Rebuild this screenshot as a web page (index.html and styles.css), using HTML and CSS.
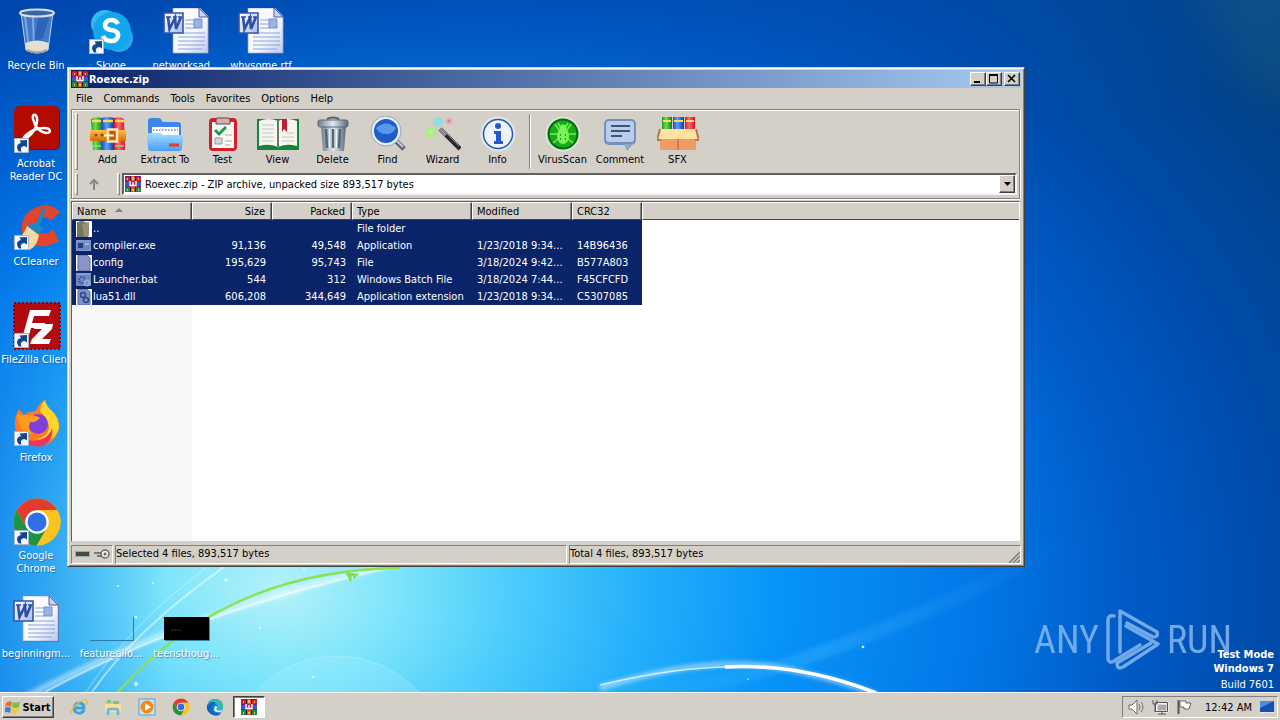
FILE: index.html
```html
<!DOCTYPE html>
<html lang="en">
<head>
<meta charset="utf-8">
<title>Roexec.zip</title>
<link rel="stylesheet" href="styles.css">
</head>
<body>
<svg class="defs" aria-hidden="true">
  <defs>
    <linearGradient id="gPaper" x1="0" y1="0" x2="1" y2="1"><stop offset="0" stop-color="#fff"/><stop offset=".6" stop-color="#f4f7ff"/><stop offset="1" stop-color="#b9c9f0"/></linearGradient>
    <linearGradient id="gWord" x1="0" y1="0" x2="1" y2="1"><stop offset="0" stop-color="#fff"/><stop offset="1" stop-color="#a9bdf0"/></linearGradient>
    <linearGradient id="gG" x1="0" x2="1"><stop offset="0" stop-color="#1d9a28"/><stop offset=".4" stop-color="#6fe04a"/><stop offset="1" stop-color="#0b7d2a"/></linearGradient>
    <linearGradient id="gB" x1="0" x2="1"><stop offset="0" stop-color="#1d4fd0"/><stop offset=".4" stop-color="#5aa2ff"/><stop offset="1" stop-color="#0b3aa0"/></linearGradient>
    <linearGradient id="gR" x1="0" x2="1"><stop offset="0" stop-color="#d0182c"/><stop offset=".4" stop-color="#ff6a72"/><stop offset="1" stop-color="#d01030"/></linearGradient>
    <linearGradient id="gO" x1="0" x2="0" y1="0" y2="1"><stop offset="0" stop-color="#ffc04a"/><stop offset="1" stop-color="#d86a08"/></linearGradient>
    <linearGradient id="gFold" x1="0" y1="0" x2="0" y2="1"><stop offset="0" stop-color="#9fe0ff"/><stop offset="1" stop-color="#4a9cf4"/></linearGradient>
    <linearGradient id="gSteel" x1="0" x2="1"><stop offset="0" stop-color="#6d7f90"/><stop offset=".5" stop-color="#e2eaf0"/><stop offset="1" stop-color="#56687a"/></linearGradient>
  </defs>
  <symbol id="rar" viewBox="0 0 16 16">
    <path fill="#6a1f90" d="M0 0h16v16H0z"/>
    <path fill="#d02030" d="M0 1h5v4H0zM11 1h5v4h-5z"/><path fill="#3558d8" d="M0 6h5v4H0zM11 6h5v4h-5z"/>
    <path fill="#1d8c34" d="M0 11h5v5H0zM11 11h5v5h-5z"/><path fill="#d8543a" d="M5 0h6v16H5z"/>
    <path fill="#3b0a3c" d="M5 0h1v16H5zM10 0h1v16h-1z"/><path fill="#f0c040" d="M2 2h1v2H2zM13 2h1v2h-1zM2 13h1v2H2zM13 13h1v2h-1zM7 1h2v3H7zM7 13h2v2H7z"/>
    <path fill="#a8304a" d="M4 5h8v6H4z"/><path d="M5 5v4.500h6V5M8 6v3" fill="none" stroke="#fff" stroke-width="1.300"/>
  </symbol>
  <symbol id="word" viewBox="0 0 48 48">
    <path d="M11 1h27l8 8v37H11z" fill="#3c5687" opacity=".7"/>
    <path d="M10 0h27l8 8v37H10z" fill="url(#gPaper)" stroke="#8fa3d0" stroke-width=".7"/>
    <path d="M36 0v9h9z" fill="#c6d6f6" stroke="#48639c"/>
    <path d="M22 12h10M22 16h10M22 20h10M15 25h27M15 29h27M15 33h27M15 37h27M15 41h24" stroke="#8da3d2"/>
    <path d="M31 11h8v9h-8z" fill="#9bb3e2" stroke="#7290cc"/>
    <path d="M1 5h19v20H1z" fill="url(#gWord)" stroke="#3455a8" stroke-width="1.600"/>
    <path d="M5 9l1.500 12L12 10l1 11 5-12" fill="none" stroke="#2d4fa5" stroke-width="2.600"/><path d="M3 9h5M10 9h4M15 9h4" stroke="#2d4fa5" stroke-width="1.500"/>
  </symbol>
  <symbol id="link" viewBox="0 0 15 15">
    <path d="M.5.5h14v14H.5z" fill="#f5f8fc" stroke="#a9b8c8"/><path d="M5 13.500C1.500 9 3 6 7 5L5.500 2.500l7.500-.5v7.500L10.500 8C7.500 8.500 6 10 7.500 13.500z" fill="#16458f"/>
  </symbol>
  <symbol id="chrome" viewBox="0 0 48 48">
    <circle cx="24" cy="24" r="23.500" fill="#fbc116"/>
    <path d="M3.700 12.300A23.500 23.500 0 0 1 44.400 12.300H24L14 30z" fill="#e33b2e"/>
    <path d="M3.700 12.300A23.500 23.500 0 0 0 23.800 47.500L34 30H14z" fill="#1d9445"/>
    <path d="M24 12.300h20.400A23.500 23.500 0 0 1 23.800 47.500L34 30z" fill="#fcc31e"/>
    <circle cx="24" cy="24" r="11.800" fill="#fff"/><circle cx="24" cy="24" r="9.500" fill="#2f6fe8"/>
  </symbol>
  <symbol id="books" viewBox="0 0 36 36">
    <path d="M1 3q5-3 11-1v32H3z" fill="url(#gG)"/><path d="M12 2q6-2 12 0v32H12z" fill="url(#gB)"/><path d="M24 2q6-2 10 1l1 31H24z" fill="url(#gR)"/>
    <path d="M2 5h9M13 5h10M25 5h9" stroke="#ffd84a" stroke-width="2.500"/><path d="M3 30h8M25 30h9" stroke="#7af070" stroke-width="2" opacity=".7"/>
    <path d="M0 14h36v11H0z" fill="url(#gO)"/><path d="M18 13.500h9v12h-9z" fill="#c05a10" stroke="#ffe9b0" stroke-width="2.500"/><path d="M14 19.500h10" stroke="#fff3d0" stroke-width="2"/><circle cx="6" cy="19" r="1.500" fill="#8d4a00"/><circle cx="12" cy="19" r="1.500" fill="#8d4a00"/>
  </symbol>
</svg>

<div class="screen">
  <main class="desktop">
    <svg class="wallpaper" viewBox="0 0 1280 692" preserveAspectRatio="none" aria-hidden="true">
      <defs>
        <radialGradient id="sky" gradientUnits="userSpaceOnUse" cx="0" cy="0" r="1.200" gradientTransform="translate(280 590) scale(1000 750)">
          <stop offset="0" stop-color="#b4f2fa"/><stop offset=".1" stop-color="#7ce4fb"/><stop offset=".2" stop-color="#4acbfb"/><stop offset=".3" stop-color="#25b0fb"/><stop offset=".42" stop-color="#0793f8"/><stop offset=".58" stop-color="#0278e8"/><stop offset=".7" stop-color="#005cc8"/><stop offset=".82" stop-color="#004cac"/><stop offset="1" stop-color="#004186"/>
        </radialGradient>
        <linearGradient id="edge" x1="0" x2="1"><stop offset="0" stop-color="#0060e0" stop-opacity=".5"/><stop offset=".13" stop-color="#0070e8" stop-opacity="0"/></linearGradient>
        <linearGradient id="top" gradientUnits="userSpaceOnUse" x1="150" y1="0" x2="200" y2="280"><stop offset="0" stop-color="#0040a4" stop-opacity=".75"/><stop offset="1" stop-color="#0058c0" stop-opacity="0"/></linearGradient>
        <linearGradient id="fade" gradientUnits="userSpaceOnUse" x1="640" y1="0" x2="1080" y2="0"><stop offset="0" stop-color="#4ac0ff" stop-opacity="0"/><stop offset=".4" stop-color="#4ac0ff"/><stop offset="1" stop-color="#3898f4" stop-opacity="0"/></linearGradient>
        <filter id="soft" x="-10%" y="-30%" width="120%" height="160%"><feGaussianBlur stdDeviation="2"/></filter>
        <filter id="softer" x="-50%" y="-50%" width="200%" height="200%"><feGaussianBlur stdDeviation="22"/></filter>
      </defs>
      <path d="M0 0h1280v692H0z" fill="url(#sky)"/><path d="M0 0h1280v692H0z" fill="url(#edge)"/><path d="M0 0h1280v692H0z" fill="url(#top)"/>
      <path d="M1180-30h130v140l-60-20z" fill="#2a6878" opacity=".3" filter="url(#softer)"/>
      <circle cx="337" cy="766" r="110" fill="#b8f4ff" opacity=".2"/><circle cx="337" cy="766" r="110" fill="none" stroke="#d8fbff" opacity=".3"/>
      <g fill="none" stroke="#fff">
        <path d="M640 692Q800 686 1090 530" stroke="url(#fade)" stroke-width="14" opacity=".3" filter="url(#soft)"/>
        <path d="M20 700Q190 610 410 560" stroke-width="6" opacity=".5" filter="url(#soft)"/><path d="M45 692Q200 608 410 563" stroke-width="2" opacity=".5"/>
        <path d="M92 692Q135 630 224 567" stroke-width="2" opacity=".5"/><path d="M86 692Q130 625 207 567" opacity=".4"/>
        <path d="M600 688Q720 650 800 672Q845 682 880 696" stroke-width="5" opacity=".5" filter="url(#soft)"/>
        <path d="M600 685Q680 666 735 667" stroke-width="1.500" opacity=".7"/><path d="M725 667Q800 663 876 693" stroke-width="3.500"/>
      </g>
      <path d="M118 692Q225 570 400 568" fill="none" stroke="#8de04e" stroke-width="2.300"/><path d="M345 572l6 11 1-8 2 4 5-5z" fill="#7ede5a"/>
      <g fill="#e7fcff"><circle cx="226" cy="580" r="1.800"/><circle cx="153" cy="583" r="1"/><circle cx="118" cy="586" r="1"/><circle cx="136" cy="617" r="1.500"/><circle cx="136" cy="684" r="2"/><circle cx="304" cy="570" r="1"/><circle cx="313" cy="677" r="1.300"/><circle cx="260" cy="628" r="1"/><circle cx="748" cy="679" r=".8"/><circle cx="863" cy="647" r="1.300"/></g>
    </svg>

    <div class="anyrun" aria-label="ANY RUN">
      <span>ANY</span>
      <svg width="56" height="64" viewBox="0 0 56 64" fill="none" stroke="currentColor" stroke-width="3.500" stroke-linejoin="round" stroke-linecap="round"><path d="M15 44V3L52 24q2 5-4 5L22 15"/><path d="M9 8q-6-1-6 4v39q1 5 6 2L35 37"/><path d="M21 18L53 36 18 59q-6 3-6-4L46 35"/></svg>
      <span>RUN</span>
    </div>
    <div class="build"><b>Test Mode</b><b>Windows 7</b><span>Build 7601</span></div>

    <div class="icons">
      <div class="item"><svg viewBox="0 0 48 48"><path d="M8 5l5 37q11 6 22 0l5-37z" fill="#9fc3ee" fill-opacity=".4" stroke="#b9cfe8"/><path d="M26 8l10 2-6 20-10 5z" fill="#1a4ea8" opacity=".5"/><path d="M12 8l4 33M20 9l1 30" stroke="#dcecff" stroke-width="2" opacity=".4"/><path d="M12 35q12-5 24 0l-1 7q-11 6-22 0z" fill="#e4dfd5"/><path d="M14 42q10 5 20 0" fill="none" stroke="#a7a29a" stroke-width="2"/><ellipse cx="24" cy="5" rx="17" ry="3.500" fill="#38689f" stroke="#d8dee6" stroke-width="2"/></svg><span>Recycle Bin</span></div>
      <div class="item at-2-1"><svg viewBox="0 0 48 48"><circle cx="17" cy="16" r="14" fill="#35b8f0"/><circle cx="31" cy="30" r="14" fill="#28a8ea"/><circle cx="24" cy="23" r="19" fill="#12a7ec"/><path d="M30 16q-2-4-7-4t-6 5q0 4 6 5 8 1 7 6-1 5-7 5t-8-5" fill="none" stroke="#fff" stroke-width="4.500"/><use href="#link" x="1" y="31" width="15" height="15"/></svg><span>Skype</span></div>
      <div class="item at-3-1"><svg viewBox="0 0 48 48"><use href="#word" width="48" height="48"/></svg><span>networksad...</span></div>
      <div class="item at-4-1"><svg viewBox="0 0 48 48"><use href="#word" width="48" height="48"/></svg><span>whysome.rtf</span></div>
      <div class="item at-1-2"><svg viewBox="0 0 48 48"><rect x="2" width="45" height="44" rx="6" fill="#7d0c08"/><rect x="1" width="45" height="43" rx="6" fill="#b30b00"/><path d="M12 32c7-2 13-12 12-20-1-5-5-4-4 1 2 8 7 13 13 14 6 0 5-5-2-5-8 0-15 4-19 8-3 4-1 5 1 1z" fill="none" stroke="#fff" stroke-width="2.500"/><use href="#link" x="1" y="32" width="15" height="15"/></svg><span>Acrobat Reader DC</span></div>
      <div class="item at-1-3"><svg viewBox="0 0 48 48"><path d="M47 8Q39-1 27 2 12 6 9 20q-2 14 9 20 13 6 28-3l-6-12q-6 6-12 4-7-4-4-11 5-8 15-2z" fill="#e2452f"/><path d="M30 4l3 1-6 16 4 4-8 6-10-7 6-5 4 0z" fill="#1e86c4"/><path d="M14 22l12 9q-2 12-10 15L0 37q10-3 14-15z" fill="#f3d9a2"/><use href="#link" x="1" y="31" width="15" height="15"/></svg><span>CCleaner</span></div>
      <div class="item at-1-4"><svg viewBox="0 0 48 48"><path d="M1 1h46v46H1z" fill="#b20a0e" stroke="#8b0508" stroke-width="2" stroke-dasharray="2 2"/><path d="M17 8h21l-2 6H21l-2 7h13l-2 5H18l-4 14H8z" fill="#fff"/><path d="M22 22h18l-1 5-10 10h9l-2 5H17l2-5 10-10h-8z" fill="#fff"/><use href="#link" x="1" y="31" width="15" height="15"/></svg><span>FileZilla Client</span></div>
      <div class="item at-1-5"><svg viewBox="0 0 48 48"><path d="M6 9l5 6q6-4 12-4 2-7 9-11 1 6 6 10 9 8 8 18-3 17-22 18Q4 45 2 28 1 17 6 9z" fill="#ff7b22"/><path d="M32 0q-5 5-5 11 9 8 9 17-1 9-12 11 17 6 22-11Q46 17 38 10 33 6 32 0z" fill="#ffd42e"/><path d="M2 28q8 16 24 12 11-3 13-12 2 12-9 18Q7 49 2 28z" fill="#f1335c"/><circle cx="25" cy="24" r="10" fill="#7c3fd8"/><path d="M4 14q8 2 13 1 8 1 10 3-4 5-10 4-3 8 3 12Q6 34 4 14z" fill="#ff9a20"/><use href="#link" x="1" y="31" width="15" height="15"/></svg><span>Firefox</span></div>
      <div class="item at-1-6"><svg viewBox="0 0 48 48"><use href="#chrome" width="48" height="48"/><use href="#link" x="1" y="32" width="15" height="15"/></svg><span>Google Chrome</span></div>
      <div class="item at-1-7"><svg viewBox="0 0 48 48"><use href="#word" width="48" height="48"/></svg><span>beginningm...</span></div>
      <div class="item at-2-7"><svg viewBox="0 0 48 48"><path d="M2 44.500h43.500V21" fill="none" stroke="#257fa8"/></svg><span>featureallo...</span></div>
      <div class="item at-3-7"><svg viewBox="0 0 48 48"><path d="M2 22h45v23H2z" fill="#104c62" opacity=".6"/><path d="M1 21h45v23H1z"/><path d="M8 34h10" stroke="#454535" stroke-dasharray="2 1"/></svg><span>teensthoug...</span></div>
    </div>

    <section class="window">
      <header class="titlebar">
        <svg width="16" height="16"><use href="#rar"/></svg><h1>Roexec.zip</h1>
        <div class="controls">
          <button class="ctl" aria-label="Minimize"><svg width="12" height="10"><path d="M2 8h6" stroke="#000" stroke-width="2"/></svg></button><button class="ctl" aria-label="Maximize"><svg width="12" height="10"><path d="M1.500 1v8h8V1z" fill="none" stroke="#000"/><path d="M1 1h9" stroke="#000" stroke-width="2"/></svg></button><button class="ctl close" aria-label="Close"><svg width="12" height="10"><path d="M2 1l7 7M9 1L2 8" stroke="#000" stroke-width="1.600"/></svg></button>
        </div>
      </header>
      <nav class="menu"><button>File</button><button>Commands</button><button>Tools</button><button>Favorites</button><button>Options</button><button>Help</button></nav>
      <div class="rebar">
        <div class="toolbar">
          <i class="grip"></i>
          <button class="tool"><svg viewBox="0 0 36 36"><use href="#books"/></svg>Add</button>
          <button class="tool wide"><svg viewBox="0 0 36 36"><path d="M1 5q0-3 3-3h7q3 0 4 3l1 1h15q3 0 3 3v20H1z" fill="#3f86ea"/><path d="M5 11h27v9H5z" fill="#fff"/><path d="M6 14h25" stroke="#87a4c8" stroke-width="2" stroke-dasharray="1.500 1.500"/><path d="M0 20q0-3 3-3h10l3 2h17q3 0 3 3l-1 10q0 3-3 3H4q-3 0-3-3z" fill="url(#gFold)"/><path d="M22 29h10" stroke="#e23a2e" stroke-width="3"/></svg>Extract To</button>
          <button class="tool"><svg viewBox="0 0 36 36"><rect x="4" y="2" width="28" height="33" rx="4" fill="#d2202e"/><path d="M7 6h22v26H7z" fill="#faf8f6"/><path d="M11 8V4q0-2 2-2h10q2 0 2 2v4z" fill="#d9aeb0" stroke="#59464d"/><path d="M10 14l4 4 7-7" fill="none" stroke="#1f9a43" stroke-width="3"/><path d="M10 22h7v6h-7z" fill="#d7d7d7" stroke="#999"/><path d="M20 19h7M20 25h7M20 29h5" stroke="#aaa"/></svg>Test</button>
          <button class="tool"><svg class="broad" viewBox="0 0 42 36"><path d="M0 3h42v31H0z" fill="#168438"/><path d="M2 5q10-4 19 0 9-4 19 0v25q-10-3-19 1-9-4-19-1z" fill="#f7f5ef"/><path d="M21 5v27" stroke="#6b776c" stroke-width="2"/><path d="M5 9h12M5 13h12M5 17h12M5 21h12M5 25h12M30 17h7M25 21h12M25 25h12" stroke="#c3c6bf"/><path d="M25 3h5v13l-3-3-2 3z" fill="#bf1c35"/></svg>View</button>
          <button class="tool"><svg viewBox="0 0 36 36"><path d="M6 10h25l-2 25H8z" fill="url(#gSteel)"/><path d="M11 13l1 19M18 13v19M25 13l-1 19" stroke="#546576" stroke-width="2.500"/><path d="M14.500 13v19M21.500 13v19" stroke="#eaf2f8"/><rect x="3" y="4" width="30" height="7" rx="2" fill="url(#gSteel)" stroke="#56687a"/><path d="M12 3q6-3 12 0" fill="none" stroke="#525f6c" stroke-width="2"/></svg>Delete</button>
          <button class="tool"><svg viewBox="0 0 36 36"><path d="M25 24l9 9" stroke="#5e666d" stroke-width="5"/><path d="M25 23l8 8" stroke="#c8ced4" stroke-width="2"/><circle cx="16" cy="15" r="15" fill="#e5edf5" stroke="#95a5b9"/><circle cx="16" cy="15" r="12" fill="#205cc8"/><path d="M6 12q10-9 20 0-4 7-10 6Q9 18 6 12z" fill="#6aacf5" opacity=".75"/></svg>Find</button>
          <button class="tool"><svg viewBox="0 0 36 36"><path d="M15 13l20 20" stroke="#27292c" stroke-width="4.500"/><path d="M15 13l6 6" stroke="#8d8d8d" stroke-width="4"/><path d="M17 13l17 17" stroke="#8d8d8d"/><g opacity=".35"><circle cx="6" cy="16" r="6" fill="#8aff4e"/><circle cx="13" cy="6" r="5" fill="#48dcff"/><circle cx="24" cy="5" r="3.500" fill="#ff829a"/></g><circle cx="6" cy="16" r="3" fill="#a6ff6b"/><circle cx="13" cy="6" r="2.500" fill="#72ecf4"/><circle cx="24" cy="5" r="1.500" fill="#ff6e88"/></svg>Wizard</button>
          <button class="tool"><svg viewBox="0 0 36 36"><circle cx="18" cy="18" r="17.500" fill="#dce5f2"/><circle cx="18" cy="18" r="14.500" fill="#eef4fd" stroke="#2859a9" stroke-width="1.500"/><circle cx="18" cy="10" r="3" fill="#245acc"/><path d="M14 15h7v10h2v3h-9v-3h2v-7h-2z" fill="#245acc"/></svg>Info</button>
          <i class="divider"></i>
          <button class="tool"><svg viewBox="0 0 36 36"><circle cx="18" cy="18" r="17.500" fill="#d9e6db"/><circle cx="18" cy="18" r="15.500" fill="#09660e"/><circle cx="18" cy="18" r="13.500" fill="#16ac19"/><path d="M10 8l4 6M26 8l-4 6M5 18h7M31 18h-7M8 27l6-5M28 27l-6-5M13 7l3 5M23 7l-3 5" stroke="#73f058" stroke-width="1.500"/><ellipse cx="18" cy="20" rx="6" ry="8" fill="#7bf45a"/><circle cx="18" cy="12" r="3.500" fill="#7bf45a"/><path d="M15 19h1M20 19h1M15 23h1M20 23h1" stroke="#0e8115" stroke-width="1.500"/></svg>VirusScan</button>
          <button class="tool wide"><svg viewBox="0 0 36 36"><rect x="2" y="3" width="32" height="26" rx="5" fill="#7291bf"/><path d="M22 28h9l-6 7z" fill="#8ea5c6"/><rect x="4" y="5" width="28" height="21" rx="3" fill="#bacce8"/><path d="M9 10h19M9 15h19M9 20h11" stroke="#39557e" stroke-width="2"/></svg>Comment</button>
          <button class="tool"><svg class="broad" viewBox="0 0 42 36"><path d="M5 1h10v13H5z" fill="url(#gG)"/><path d="M16 1h11v13H16z" fill="url(#gB)"/><path d="M28 1h10v13H28z" fill="url(#gR)"/><path d="M6 5h8M17 5h9M29 5h8" stroke="#ffdb57" stroke-width="2"/><path d="M3 18h36v16H3z" fill="#ef9b63"/><path d="M4 13h34l2 10H2z" fill="#ffe1a0"/><path d="M3 13l-3 11h4M39 13l3 11h-4" fill="none" stroke="#bd7549" stroke-width="2"/><path d="M21 23v11" stroke="#ad5f38"/></svg>SFX</button>
        </div>
        <div class="address">
          <i class="grip"></i>
          <button class="up" aria-label="Up one level"><svg width="14" height="14"><path d="M7 13V3M3 7l4-4 4 4" fill="none" stroke="#858585" stroke-width="2"/></svg></button>
          <i class="grip"></i>
          <div class="combo"><svg width="16" height="16"><use href="#rar"/></svg>
            <select aria-label="Archive path"><option>Roexec.zip - ZIP archive, unpacked size 893,517 bytes</option></select>
            <i class="drop"><svg width="9" height="5"><path d="M1 0h7L4.500 4z"/></svg></i></div>
        </div>
      </div>
      <div class="list">
        <table>
          <colgroup><col class="c120"><col class="c80"><col class="c80"><col class="c120"><col class="c100"><col class="c70"><col></colgroup>
          <thead><tr><th>Name <svg class="sort" width="8" height="4"><path d="M0 4l4-4 4 4z" fill="#85827b"/></svg></th><th class="num">Size</th><th class="num">Packed</th><th>Type</th><th>Modified</th><th>CRC32</th><th class="rest"></th></tr></thead>
          <tbody>
            <tr><td><div class="file"><svg width="16" height="16"><path d="M0 0h16v16H0z" fill="#fff"/><path d="M1 1l5-1 6 2v14H1z" fill="#77755f"/><path d="M6 3l7-2v14l-5 1z" fill="#96917b"/></svg>..</div></td><td></td><td></td><td>File folder</td><td></td><td></td></tr>
            <tr><td><div class="file"><svg width="16" height="16"><path d="M0 2h15v11H0z" fill="#8596c8"/><path d="M1 4h13v8H1z" fill="#6f88c2"/><path d="M2 5h5v5H2z" fill="#1b4287"/><path d="M9 5h4v2H9z" fill="#a5b4e3"/></svg>compiler.exe</div></td><td class="num">91,136</td><td class="num">49,548</td><td>Application</td><td>1/23/2018 9:34...</td><td>14B96436</td></tr>
            <tr><td><div class="file"><svg width="16" height="16"><path d="M0 0h16v16H0z" fill="#fff"/><path d="M2 0h9l3 3v13H2z" fill="#8995c9" stroke="#5c6da9"/></svg>config</div></td><td class="num">195,629</td><td class="num">95,743</td><td>File</td><td>3/18/2024 9:42...</td><td>B577A803</td></tr>
            <tr><td><div class="file"><svg width="16" height="16"><path d="M0 1h15v13H0z" fill="#7188bd"/><path d="M0 1h15v2H0z" fill="#8a9bc6"/><circle cx="6" cy="8" r="3" fill="none" stroke="#3a569a" stroke-width="2" stroke-dasharray="2 1"/><circle cx="11" cy="11" r="2.500" fill="none" stroke="#95a7d4" stroke-width="2"/></svg>Launcher.bat</div></td><td class="num">544</td><td class="num">312</td><td>Windows Batch File</td><td>3/18/2024 7:44...</td><td>F45CFCFD</td></tr>
            <tr><td><div class="file"><svg width="16" height="16"><path d="M0 0h16v16H0z" fill="#fff"/><path d="M2 0h9l3 3v13H2z" fill="#7f91c4" stroke="#5c6da9"/><circle cx="7" cy="6" r="2.500" fill="none" stroke="#28468a" stroke-width="1.500"/><circle cx="10" cy="11" r="2.500" fill="none" stroke="#28468a" stroke-width="1.500"/></svg>lua51.dll</div></td><td class="num">606,208</td><td class="num">344,649</td><td>Application extension</td><td>1/23/2018 9:34...</td><td>C5307085</td></tr>
          </tbody>
        </table>
      </div>
      <footer class="status">
        <div class="pane lamps"><svg width="38" height="14"><path d="M2.500 4.500h14v5h-14z" fill="#3f4e4d" stroke="#9daaa9"/><path d="M21 6h7M24 9h5" stroke="#777" stroke-width="2"/><circle cx="32" cy="7" r="4" fill="#eee" stroke="#666" stroke-width="1.500"/><circle cx="32" cy="7" r="1.500" fill="#666"/></svg></div>
        <div class="pane">Selected 4 files, 893,517 bytes</div>
        <div class="pane">Total 4 files, 893,517 bytes<svg class="size-grip" width="12" height="12"><path d="M1 12L12 1M5 12l7-7M9 12l3-3" stroke="#7e7b74" stroke-width="1.500"/></svg></div>
      </footer>
    </section>
  </main>

  <footer class="taskbar">
    <button class="start"><svg width="16" height="16"><path d="M1 4q3-3 6-1L6 8Q3 6 0 8z" fill="#ef6a2a"/><path d="M8 3q4 2 7-1l-1 6q-3 2-7 0z" fill="#7bbf3a"/><path d="M0 9q3-2 6 0l-1 5q-3-2-6 0z" fill="#3b7fd4"/><path d="M7 9q3 2 7 0l-2 5q-3 2-6 0z" fill="#f7c728"/></svg>Start</button>
    <div class="quick">
      <button aria-label="Internet Explorer"><svg viewBox="0 0 18 18"><path d="M14 12q-2 4-6 3-4-1-4-5 1-5 5-5 5 0 5 5H5" fill="none" stroke="#36a4e4" stroke-width="2.800"/><path d="M2 16q-3-2 3-8Q12 1 16 2q2 1 0 5" fill="none" stroke="#ecbd35" stroke-width="1.500"/></svg></button>
      <button aria-label="Explorer"><svg viewBox="0 0 18 18"><path d="M1 3h6l1 2h8v9H1z" fill="#e9c963"/><path d="M3 2h4v3H3zM9 3h6v3H9z" fill="#7cc48a"/><path d="M1 6h16v8H1z" fill="#f8e194"/><path d="M4 17v-4q0-2 2-2h6q2 0 2 2v4" fill="none" stroke="#65b5e5" stroke-width="2.500"/></svg></button>
      <button aria-label="Media Player"><svg viewBox="0 0 18 18"><path d="M1 1h16v16H1z" fill="#c7e1f6" stroke="#5c9fd1"/><circle cx="9" cy="9" r="6.500" fill="#f38b12"/><path d="M7 5l6 4-6 4z" fill="#fff"/></svg></button>
      <button aria-label="Chrome"><svg viewBox="-1 -1 50 50"><use href="#chrome" width="48" height="48"/></svg></button>
      <button aria-label="Edge"><svg viewBox="0 0 18 18"><circle cx="9" cy="9" r="8" fill="#1478d2"/><path d="M1 8Q3 0 11 1q7 2 6 9-2 4-7 1 3-3 0-5-4-3-9 2z" fill="#32b8b0"/><path d="M1 8q4-6 9-3-5 1-4 7 3 6 10 3-5 5-11 1Q0 13 1 8z" fill="#1464bc"/><path d="M9 8q4 0 1 3 4 3 7 0l-2 3q-7 1-7-3z" fill="#d9f4f5"/></svg></button>
    </div>
    <button class="task" aria-label="Roexec.zip"><svg width="16" height="16"><use href="#rar"/></svg></button>
    <div class="tray">
      <svg width="17" height="16"><path d="M1 6h3l5-5v14l-5-5H1z" fill="#fff" stroke="#666"/><path d="M11 5q2 3 0 6M13 3q4 5 0 10" fill="none" stroke="#777"/></svg>
      <svg width="17" height="16"><path d="M4.500 4.500h11v8h-11z" fill="#aaa" stroke="#fff" stroke-width="2"/><path d="M3.500 3.500h12v9h-12zM6 15h8M10 13v2M1 1v4h4V1M3 5v8" fill="none" stroke="#555"/></svg>
      <svg width="17" height="16"><path d="M2.500 1v14" stroke="#555" stroke-width="2"/><path d="M4 2h6v2h5l-2 6H8V8H4z" fill="#fff" stroke="#666"/></svg>
      <time>12:42 AM</time>
      <svg width="16" height="16"><path d="M1 2h14v11H1z" fill="#194fb1"/><path d="M1 2h14L1 9z" fill="#4c8be0"/><path d="M0 13h15v1H0z" fill="#dfe8f2"/></svg>
    </div>
  </footer>
</div>
</body>
</html>
```
FILE: styles.css
```css
* { box-sizing: border-box; }
body { margin: 0; font: 11px/13px Tahoma, "DejaVu Sans Condensed", "Noto Sans", sans-serif; color: #000; }
button { font: inherit; color: inherit; background: none; border: 0; padding: 0; margin: 0; }
svg { display: block; flex: none; }
.defs { position: absolute; width: 0; height: 0; }

.screen { height: 100vh; display: grid; grid-template-rows: 1fr auto; overflow: hidden; }
.desktop { position: relative; overflow: hidden; min-height: 0; background: #0278e8; }
.wallpaper { position: absolute; width: 100%; height: 100%; }

.icons { position: relative; display: grid; grid-template-columns: repeat(4, 75px); grid-auto-rows: 98px; color: #fff; }
.item { grid-area: 1 / 1; display: flex; flex-direction: column; align-items: center; gap: 3px; padding: 8px 3px 0 0; text-align: center; white-space: nowrap; text-shadow: 1px 1px 1px #0a3c7888; }
.item svg { width: 48px; height: 48px; margin-left: 1px; }
.item span { max-width: 72px; }
.at-2-1 { grid-area: 1 / 2; } .at-3-1 { grid-area: 1 / 3; } .at-4-1 { grid-area: 1 / 4; }
.at-1-2 { grid-area: 2 / 1; white-space: normal; } .at-1-3 { grid-area: 3 / 1; } .at-1-4 { grid-area: 4 / 1; }
.at-1-5 { grid-area: 5 / 1; } .at-1-6 { grid-area: 6 / 1; white-space: normal; } .at-1-7 { grid-area: 7 / 1; }
.at-2-7 { grid-area: 7 / 2; } .at-3-7 { grid-area: 7 / 3; }
.at-1-6 span { width: 50px; }

.anyrun { position: absolute; right: 48px; bottom: 20px; display: flex; align-items: center; gap: 6px; color: #8fbdf0; opacity: .8; font: 38px/64px "Liberation Sans Narrow", "Roboto Condensed", "Open Sans Condensed", "Liberation Sans", sans-serif; }
.build { position: absolute; right: 6px; bottom: 0; display: grid; justify-items: end; line-height: 14px; color: #fff; }
.build span { margin-top: 2px; }

.window { position: absolute; inset: 67px 255px 125px 67px; display: flex; flex-direction: column; padding: 2px 3px; background: #d4d0c8; border: 1px solid; border-color: #d4d0c8 #404040 #404040 #d4d0c8; box-shadow: inset 1px 1px #fff, inset -1px -1px #808080; }
.titlebar { display: flex; align-items: center; height: 18px; padding: 0 1px; gap: 1px; color: #fff; background: linear-gradient(to right, #0a246a, #a6caf0); }
.titlebar h1 { margin: 0; font-size: 11px; flex: 1; }
.controls { display: flex; }
.ctl { display: grid; place-items: center; width: 16px; height: 14px; background: #d4d0c8; border: 1px solid; border-color: #fff #404040 #404040 #fff; box-shadow: inset -1px -1px #808080; }
.close { margin-left: 2px; }
.menu { display: flex; gap: 11px; height: 21px; padding: 0 5px 1px; align-items: center; }

.rebar { border: 1px solid #808080; box-shadow: inset 1px 1px #fff, 0 1px #fff, 1px 0 #fff; padding: 3px 2px; margin-right: 1px; }
.toolbar { display: flex; height: 57px; }
.grip { width: 3px; margin: 0 2px 0 1px; border: 1px solid; border-color: #fff #808080 #808080 #fff; }
.tool { display: flex; flex-direction: column; align-items: center; gap: 1px; min-width: 55px; padding-top: 3px; white-space: nowrap; }
.tool svg { width: 36px; height: 36px; }
.tool .broad { width: 42px; }
.wide { min-width: 60px; }
.divider { width: 2px; margin: 1px 4px; border-left: 1px solid #808080; border-right: 1px solid #fff; }
.address { display: flex; height: 22px; margin-top: 3px; }
.up { width: 28px; margin-right: 8px; display: grid; place-items: center; }
.combo { flex: 1; display: flex; align-items: center; background: #fff; border: 2px solid; border-color: #606060 #f4f4f4 #f4f4f4 #606060; padding-left: 1px; gap: 4px; }
.combo select { flex: 1; appearance: none; border: 0; margin: 0; padding: 0; background: none; font: inherit; color: inherit; }
.drop { width: 16px; height: 18px; display: grid; place-items: center; background: #d4d0c8; border: 1px solid; border-color: #fff #404040 #404040 #fff; box-shadow: inset -1px -1px #808080; }

.list { flex: 1; min-height: 0; overflow: hidden; margin: 2px 1px 0 0; border: 1px solid; border-color: #606060 #fff #d4d0c8 #606060; background: linear-gradient(to right, #f7f7f7 120px, #fff 120px); }
table { width: 100%; table-layout: fixed; border-collapse: separate; border-spacing: 0; }
.c120 { width: 120px; } .c100 { width: 100px; } .c80 { width: 80px; } .c70 { width: 70px; }
th { height: 18px; padding: 1px 4px 0; font-weight: normal; text-align: left; white-space: nowrap; background: #d4d0c8; border: 1px solid; border-color: #fff #404040 #404040 #fff; box-shadow: inset -1px 0 #808080; }
.rest { border-right: 0; box-shadow: none; }
.sort { display: inline-block; margin: 0 0 3px 6px; }
td { height: 17px; padding: 0 5px; white-space: nowrap; overflow: hidden; color: #fff; background: #0a246a; }
th.num, td.num { text-align: right; padding-right: 6px; }
td:first-child { padding: 0; }
.file { display: flex; align-items: center; gap: 1px; padding-left: 4px; }

.status { display: flex; height: 22px; gap: 2px; padding-top: 3px; }
.pane { position: relative; flex: 1; border: 1px solid; border-color: #808080 #fff #fff #808080; line-height: 16px; }
.lamps { flex: none; width: 42px; padding: 1px; }
.size-grip { position: absolute; right: 0; bottom: 0; }

.taskbar { display: flex; align-items: center; height: 28px; padding: 2px 2px 1px; background: #d4d0c8; border-top: 1px solid #fff; }
.start { display: flex; align-items: center; justify-content: center; gap: 1px; width: 52px; height: 22px; font-weight: bold; border: 1px solid; border-color: #fff #404040 #404040 #fff; box-shadow: inset -1px -1px #808080; }
.quick { display: flex; gap: 16px; margin-left: 16px; }
.quick svg { width: 18px; height: 18px; }
.task { display: grid; place-items: center; width: 32px; height: 22px; margin-left: 9px; background: #fff; border: 1px solid; border-color: #404040 #fff #fff #404040; box-shadow: inset 1px 1px #808080; }
.tray { display: flex; align-items: center; gap: 7px; height: 22px; margin-left: auto; padding: 0 2px 0 5px; border: 1px solid; border-color: #808080 #fff #fff #808080; }
.tray time { margin-left: 5px; }
```
